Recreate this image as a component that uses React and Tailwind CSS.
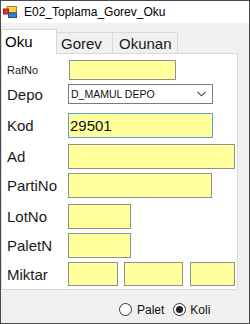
import React from 'react'

const font = { fontFamily: '"Liberation Sans", Arial, sans-serif' }

function AppIcon() {
  return (
    <svg width="14" height="12" viewBox="0 0 14 12" className="shrink-0">
      <rect x="4" y="0.5" width="9.5" height="6" fill="#f7d24a" stroke="#b08a20" strokeWidth="1" />
      <rect x="0.5" y="3" width="5" height="5" fill="#d8372b" stroke="#9a1f17" strokeWidth="1" />
      <rect x="5.5" y="7" width="8" height="4.5" fill="#3c7fd8" stroke="#1f4f95" strokeWidth="1" />
    </svg>
  )
}

function Field({ label, small, mt, h, children }) {
  return (
    <div className={`flex items-center ${mt}`} style={{ height: h }}>
      <div
        className={`w-[66px] shrink-0 pl-[5px] text-[#1a1a1a] leading-none ${small ? 'text-[11px]' : 'text-[15px]'}`}
      >
        {label}
      </div>
      {children}
    </div>
  )
}

const box = 'h-full bg-[#ffff9c] border border-[#8f8f8f]'

export default function App() {
  return (
    <div
      className="w-[250px] h-[324px] border border-[#4a4a4a] flex flex-col bg-[#f0f0f0] overflow-hidden"
      style={font}
    >
      {/* Title bar */}
      <div className="h-[22px] bg-white flex items-center pl-[2px] gap-[7px] shrink-0">
        <AppIcon />
        <span className="text-[12px] text-black">E02_Toplama_Gorev_Oku</span>
      </div>

      {/* Tabs */}
      <div className="pt-[6px] flex items-end h-[30px] shrink-0">
        <div className="relative z-10 -mb-px w-[56px] h-[25px] bg-white border border-b-0 border-[#d9d9d9] pl-[3px] pt-[4px] text-[15px] leading-none text-black">
          Oku
        </div>
        <div className="w-[56px] h-[21px] border border-b-0 border-l-0 border-[#d9d9d9] pl-[4px] pt-[3px] text-[15px] leading-none text-[#1a1a1a]">
          Gorev
        </div>
        <div className="w-[65px] h-[21px] border border-b-0 border-l-0 border-[#d9d9d9] pl-[6px] pt-[3px] text-[15px] leading-none text-[#1a1a1a]">
          Okunan
        </div>
      </div>

      {/* Panel */}
      <div className="w-[237px] h-[237px] bg-white border border-[#d9d9d9] shrink-0 flex flex-col">
        <Field label="RafNo" small mt="mt-[6px]" h={20}>
          <div className={`${box} w-[107px] ml-px`} />
        </Field>
        <Field label="Depo" mt="mt-[4px]" h={20}>
          <div className="h-full w-[145px] bg-white border border-[#7a7a7a] flex items-center justify-between pl-[2px] pr-[6px]">
            <span className="text-[10.5px] text-[#111] leading-none">D_MAMUL DEPO</span>
            <svg width="9" height="6" viewBox="0 0 9 6">
              <path d="M0.5 0.8 L4.5 4.8 L8.5 0.8" fill="none" stroke="#444" strokeWidth="1.1" />
            </svg>
          </div>
        </Field>
        <Field label="Kod" mt="mt-[9px]" h={25}>
          <div className="h-full w-[145px] bg-[#ffff9c] border border-[#5a9fd8] flex items-center pl-[1px]">
            <span className="text-[15px] leading-none text-[#111]">29501</span>
          </div>
        </Field>
        <Field label="Ad" mt="mt-[6px]" h={25}>
          <div className={`${box} w-[167px]`} />
        </Field>
        <Field label="PartiNo" mt="mt-[4px]" h={25}>
          <div className={`${box} w-[144px]`} />
        </Field>
        <Field label="LotNo" mt="mt-[6px]" h={25}>
          <div className={`${box} w-[63px]`} />
        </Field>
        <Field label="PaletN" mt="mt-[4px]" h={25}>
          <div className={`${box} w-[63px]`} />
        </Field>
        <Field label="Miktar" mt="mt-[4px]" h={24}>
          <div className={`${box} w-[50px]`} />
          <div className={`${box} w-[59px] ml-[6px]`} />
          <div className={`${box} w-[45px] ml-[7px]`} />
        </Field>
      </div>

      {/* Radios */}
      <div className="flex items-center pt-[13px] pl-[118px] text-[12px] text-[#111] leading-none">
        <div className="w-[13px] h-[13px] rounded-full border border-[#333] bg-white" />
        <span className="ml-[5px]">Palet</span>
        <div className="ml-[9px] w-[13px] h-[13px] rounded-full border border-[#333] bg-white flex items-center justify-center">
          <div className="w-[7px] h-[7px] rounded-full bg-[#222]" />
        </div>
        <span className="ml-[4px]">Koli</span>
      </div>
    </div>
  )
}
